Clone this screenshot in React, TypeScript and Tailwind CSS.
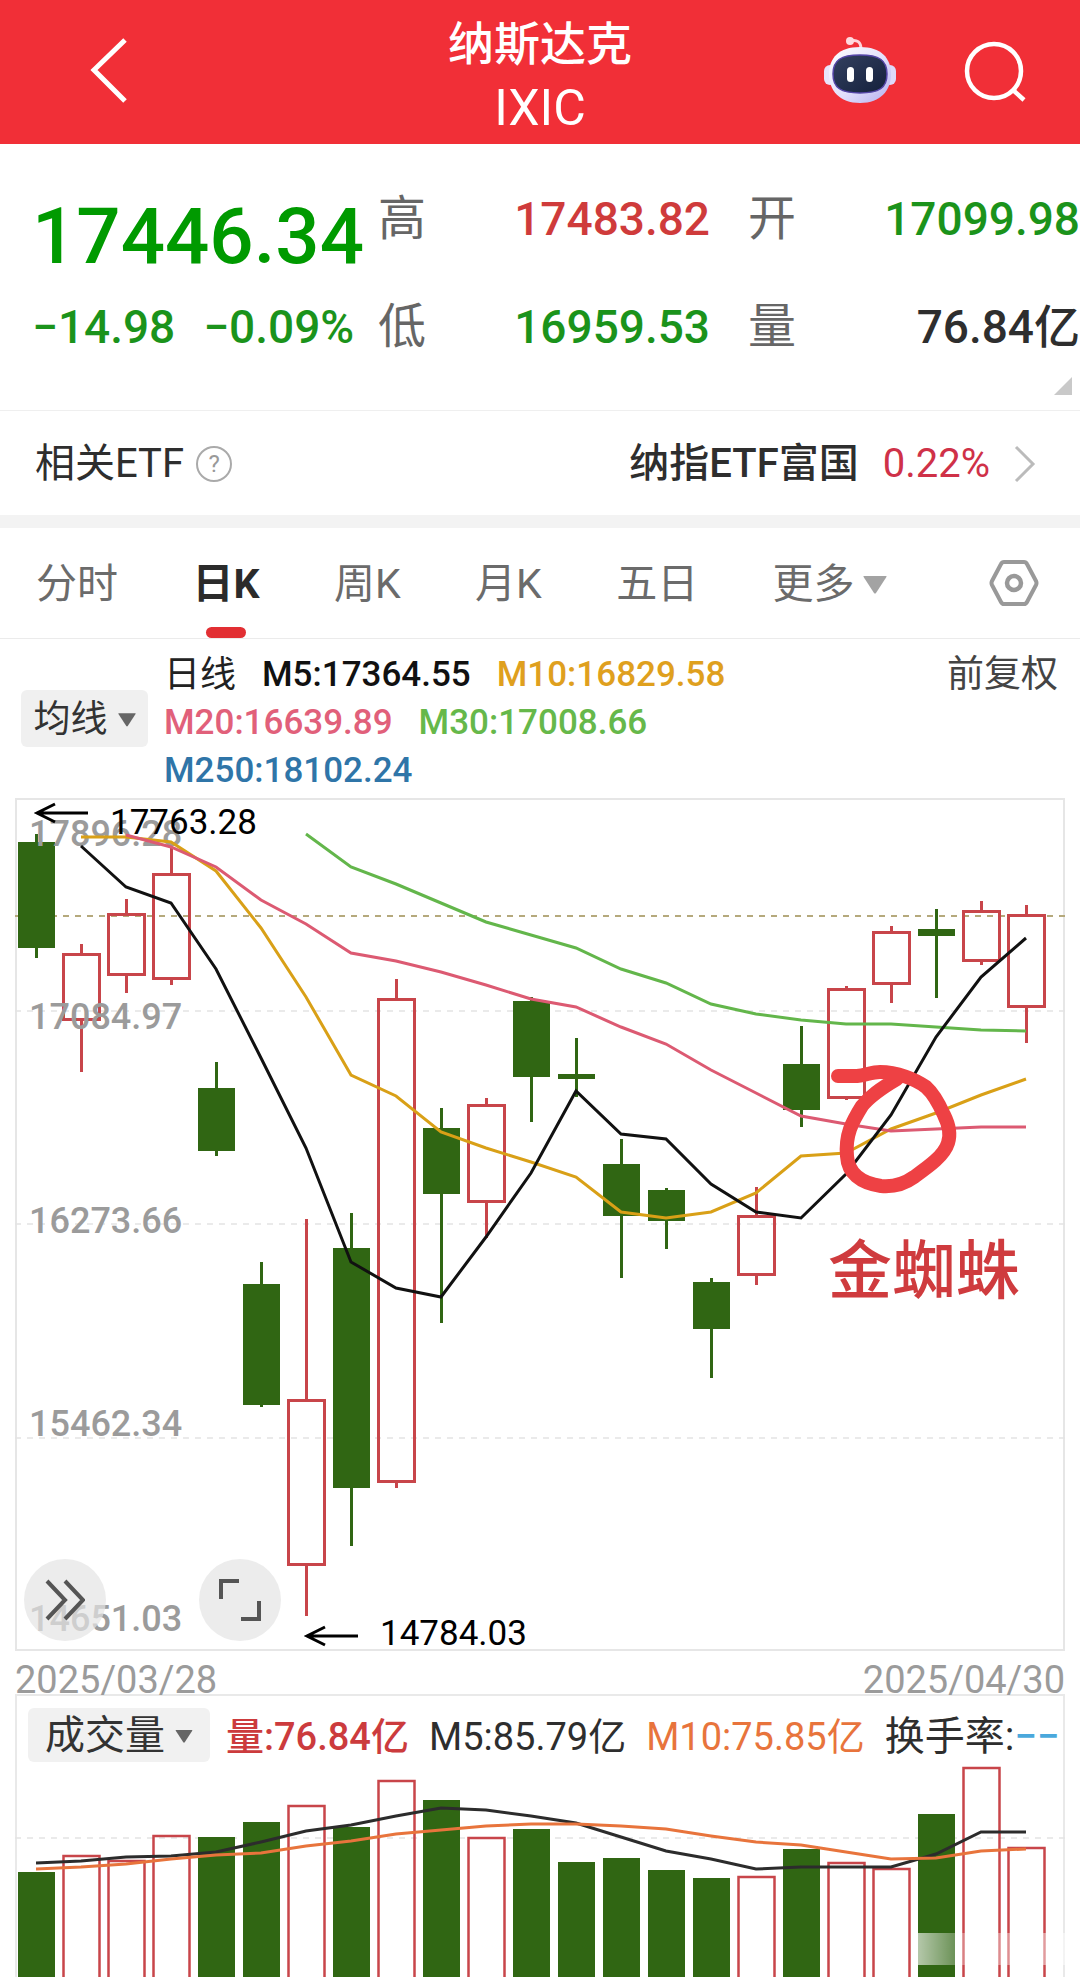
import React from "react";

type Candle = [up: 0 | 1, high: number, top: number, bottom: number, low: number];

const STEP = 45;
const FIRST_X = 36;
const cx = (i: number) => FIRST_X + i * STEP;

const candles: Candle[] = [
  [0, 834, 842, 948, 958], [1, 944, 953, 1021, 1072], [1, 899, 913, 976, 993],
  [1, 847, 873, 980, 985], [0, 1062, 1088, 1151, 1156], [0, 1262, 1284, 1405, 1407],
  [1, 1219, 1399, 1566, 1616], [0, 1213, 1248, 1488, 1546], [1, 979, 998, 1483, 1488],
  [0, 1108, 1128, 1194, 1323], [1, 1098, 1104, 1203, 1238], [0, 997, 1001, 1077, 1122],
  [0, 1038, 1074, 1079, 1097], [0, 1139, 1164, 1216, 1278], [0, 1188, 1190, 1221, 1249],
  [0, 1278, 1282, 1329, 1378], [1, 1187, 1215, 1276, 1285], [0, 1026, 1064, 1110, 1127],
  [1, 986, 988, 1099, 1100], [1, 926, 931, 985, 1003], [0, 909, 929, 936, 998],
  [1, 901, 910, 962, 965], [1, 905, 914, 1008, 1043],
];

const averages = [
  { color: "#63b64b", from: 6, ys: [834, 867, 884, 903, 922, 935, 948, 969, 983, 1004, 1014, 1020, 1024, 1024, 1027, 1030, 1031] },
  { color: "#d9a017", from: 1, ys: [837, 837, 842, 871, 928, 997, 1075, 1096, 1132, 1148, 1162, 1177, 1212, 1218, 1212, 1193, 1156, 1153, 1129, 1113, 1095, 1079] },
  { color: "#dc5a72", from: 2, ys: [835, 847, 867, 900, 924, 953, 961, 972, 985, 999, 1007, 1027, 1044, 1070, 1093, 1116, 1124, 1131, 1129, 1127, 1127] },
  { color: "#111111", from: 1, ys: [846, 887, 903, 969, 1058, 1148, 1262, 1288, 1297, 1237, 1173, 1091, 1134, 1139, 1184, 1212, 1218, 1174, 1115, 1037, 977, 938] },
];

const volumeTops = [1872, 1855, 1860, 1835, 1837, 1822, 1805, 1827, 1780, 1800, 1837, 1829, 1862, 1858, 1870, 1878, 1876, 1849, 1862, 1868, 1814, 1767, 1847];

const volumeAverages = [
  { color: "#2c2c2c", ys: [1863, 1861, 1857, 1856, 1852, 1842, 1831, 1825, 1816, 1808, 1810, 1816, 1823, 1837, 1851, 1859, 1869, 1867, 1867, 1867, 1854, 1832, 1832] },
  { color: "#e8743c", ys: [1869, 1867, 1864, 1859, 1855, 1853, 1846, 1841, 1834, 1830, 1826, 1824, 1824, 1826, 1829, 1836, 1842, 1845, 1852, 1859, 1858, 1851, 1849] },
];

const axisLabels: [string, number][] = [
  ["17896.28", 846], ["17084.97", 1029], ["16273.66", 1233], ["15462.34", 1436], ["14651.03", 1631],
];

const GREEN = "#306613";
const RED = "#c8454a";

const toPoints = (ys: number[], from = 0) => ys.map((y, k) => `${cx(from + k)},${y}`).join(" ");

function Robot() {
  return (
    <svg viewBox="0 0 72 68" className="h-[68px] w-[72px]" aria-hidden="true">
      <defs>
        <linearGradient id="shell" x1="0" y1="0" x2="1" y2="1">
          <stop offset="0" stopColor="#ffffff" />
          <stop offset="0.55" stopColor="#e2dffb" />
          <stop offset="1" stopColor="#b3aef0" />
        </linearGradient>
        <linearGradient id="visor" x1="0" y1="0" x2="1" y2="1">
          <stop offset="0" stopColor="#33405f" />
          <stop offset="1" stopColor="#14203c" />
        </linearGradient>
      </defs>
      <path d="M26 5c7-2 11 1 11 8" fill="none" stroke="#ffd3da" strokeWidth="3" />
      <circle cx="26" cy="5" r="4" fill="#ffd9de" />
      <rect x="0" y="29" width="12" height="20" rx="6" fill="#e9e4fb" />
      <rect x="60" y="29" width="12" height="20" rx="6" fill="#ded9fa" />
      <path d="M36 11C57 11 67 22 67 38S57 67 36 67 5 54 5 38 15 11 36 11z" fill="url(#shell)" />
      <path d="M36 19C55 19 63 24 63 38S55 57 36 57 9 52 9 38s8-19 27-19z" fill="url(#visor)" stroke="#5546a8" strokeWidth="1.5" />
      <rect x="23" y="31" width="7" height="15" rx="3.5" fill="#fff" />
      <rect x="42" y="31" width="7" height="15" rx="3.5" fill="#fff" />
    </svg>
  );
}

function Caret({ className }: { className: string }) {
  return (
    <svg viewBox="0 0 24 18" className={className} aria-hidden="true">
      <path d="M1 0h22q1 0 .4 1L13 17q-1 1-2 0L.6 1Q0 0 1 0z" fill="currentColor" />
    </svg>
  );
}

function Header() {
  return (
    <header className="grid h-36 grid-cols-[1fr_auto_1fr] items-center bg-[#f12f37] text-white">
      <button type="button" aria-label="返回" className="ml-[90px] w-10">
        <svg viewBox="0 0 40 68" className="h-[68px] w-10" aria-hidden="true">
          <path d="M35 2 4 32l31 31" fill="none" stroke="#fff" strokeWidth="5" />
        </svg>
      </button>
      <h1 className="pt-2 text-center font-normal">
        <span className="block text-[46px] leading-16 font-medium">纳斯达克</span>
        <span className="block text-[50px] leading-16">IXIC</span>
      </h1>
      <div className="flex items-center justify-end gap-[68px] pr-[52px]">
        <button type="button" aria-label="智能助手" className="pb-1"><Robot /></button>
        <button type="button" aria-label="搜索">
          <svg viewBox="0 0 64 64" className="size-16" aria-hidden="true">
            <circle cx="30" cy="31" r="27" fill="none" stroke="#fff" strokeWidth="4.5" />
            <path d="m49 50 11 10" stroke="#fff" strokeWidth="4.5" />
          </svg>
        </button>
      </div>
    </header>
  );
}

function Stat({ label, value, className }: { label: string; value: string; className: string }) {
  return (
    <div className="flex items-center justify-between leading-[60px]">
      <dt className="text-5xl leading-[60px] font-normal text-[#666]">{label}</dt>
      <dd className={className}>{value}</dd>
    </div>
  );
}

function Quote() {
  return (
    <section className="relative grid h-[267px] grid-cols-[378fr_370fr_332fr] items-start border-b border-[#efefef] pt-[45px] whitespace-nowrap">
      <div className="pl-8">
        <p className="text-[78px] leading-[96px] font-medium text-[#009a00]">17446.34</p>
        <p className="mt-3 flex gap-7 text-[46px] leading-[60px] font-medium text-[#1b931b]">
          <span>−14.98</span>
          <span>−0.09%</span>
        </p>
      </div>
      <dl className="flex flex-col gap-12 pr-[38px] text-[46px] font-medium">
        <Stat label="高" value="17483.82" className="text-[#cf3b3b]" />
        <Stat label="低" value="16959.53" className="text-[#1b931b]" />
      </dl>
      <dl className="flex flex-col gap-12 text-[46px] font-medium">
        <Stat label="开" value="17099.98" className="text-[#1b931b]" />
        <Stat label="量" value="76.84亿" className="text-[#2e2e2e]" />
      </dl>
      <svg viewBox="0 0 18 18" className="absolute right-2 bottom-[15px] size-[18px]" aria-hidden="true">
        <path d="M18 0v18H0z" fill="#c9c9c9" />
      </svg>
    </section>
  );
}

function RelatedEtf() {
  return (
    <section className="flex h-[117px] items-center justify-between border-b-[13px] border-[#f3f3f3] pt-0.5 pr-9 pl-[35px] text-[40px] whitespace-nowrap text-[#2e2e2e]">
      <div className="flex items-center gap-3">
        <h2 className="font-normal">相关ETF</h2>
        <button type="button" aria-label="说明" className="flex size-9 items-center justify-center rounded-full border-2 border-[#aaa] text-2xl text-[#999]">
          ?
        </button>
      </div>
      <a href="#etf" className="mr-2 flex items-center">
        <span className="font-medium">纳指ETF富国</span>
        <span className="ml-6 text-[#cf3148]">0.22%</span>
        <svg viewBox="0 0 22 38" className="ml-6 h-[38px] w-[22px]" aria-hidden="true">
          <path d="m2 2 17 17L2 36" fill="none" stroke="#bbb" strokeWidth="3" />
        </svg>
      </a>
    </section>
  );
}

function Tabs() {
  return (
    <nav className="flex h-[111px] items-stretch justify-between border-b border-[#ebebeb] pr-[41px] pl-9 text-[41px] whitespace-nowrap text-[#6b6b6b]">
      <button type="button" className="pt-1">分时</button>
      <button type="button" aria-current="page" className="relative pt-1 font-bold text-[#2b2b2b]">
        日K
        <span className="absolute bottom-0 left-1/2 h-[11px] w-10 -translate-x-1/2 rounded-full bg-[#e22f33]" />
      </button>
      <button type="button" className="pt-1">周K</button>
      <button type="button" className="pt-1">月K</button>
      <button type="button" className="pt-1">五日</button>
      <button type="button" className="mr-7 flex items-center gap-2 pt-1">
        更多
        <Caret className="h-[18px] w-6 text-[#a3a3a3]" />
      </button>
      <button type="button" aria-label="设置">
        <svg viewBox="0 0 50 48" className="h-12 w-[50px]" aria-hidden="true">
          <path d="M15 3h20q2 0 3 2l9 17q1 2 0 4l-9 17q-1 2-3 2H15q-2 0-3-2L3 26q-1-2 0-4l9-17q1-2 3-2z" fill="none" stroke="#999" strokeWidth="4" />
          <circle cx="25" cy="24" r="7" fill="none" stroke="#999" strokeWidth="4.5" />
        </svg>
      </button>
    </nav>
  );
}

function Averages() {
  return (
    <section className="flex items-start pt-3 pr-[22px] pb-[3px] pl-[21px] text-[36px] leading-12 whitespace-nowrap">
      <button type="button" className="mt-[39px] flex h-[57px] w-[127px] items-center justify-center gap-[10px] rounded-md bg-[#f0f0f0] pt-0.5 text-[37px] text-[#333]">
        均线
        <Caret className="h-[14px] w-[18px] text-[#666]" />
      </button>
      <div className="ml-4 flex flex-1 flex-wrap gap-x-[26px] text-[35px] font-medium">
        <span className="text-[36px] font-normal text-[#222]">日线</span>
        <span className="text-[#111]">M5:17364.55</span>
        <span className="text-[#dfa01e]">M10:16829.58</span>
        <span className="basis-full" />
        <span className="text-[#e1607a]">M20:16639.89</span>
        <span className="text-[#66b84a]">M30:17008.66</span>
        <span className="basis-full" />
        <span className="text-[#2f75a8]">M250:18102.24</span>
      </div>
      <button type="button" className="text-[37px] text-[#444]">前复权</button>
    </section>
  );
}

function PriceChart() {
  return (
    <section className="relative mx-[15px]">
      <svg viewBox="15 798 1050 853" className="block h-auto w-full" role="img" aria-label="日K线图">
        <rect x="16" y="799" width="1048" height="851" fill="none" stroke="#e6e6e6" strokeWidth="2" />
        {[1011, 1224, 1438].map((y) => (
          <path key={y} d={`M15 ${y}H1065`} stroke="#e4e4e4" strokeWidth="1.5" strokeDasharray="6 6" />
        ))}
        <path d="M15 916H1065" stroke="#b5a97c" strokeWidth="2" strokeDasharray="6 6" />
        {candles.map(([up, high, top, bottom, low], i) => (
          <g key={i} stroke={up ? RED : GREEN} strokeWidth="3">
            <path d={`M${cx(i) + 0.5} ${high}V${top}M${cx(i) + 0.5} ${bottom}V${low}`} />
            {up ? (
              <rect x={cx(i) - 17.5} y={top + 1.5} width="36" height={bottom - top - 3} fill="none" />
            ) : (
              <rect x={cx(i) - 18} y={top} width="37" height={bottom - top} fill={GREEN} stroke="none" />
            )}
          </g>
        ))}
        <g fill="#9b9b9b" fontSize="36" fontWeight="500">
          {axisLabels.map(([text, y]) => (
            <text key={text} x="29" y={y}>{text}</text>
          ))}
        </g>
        {averages.map((line) => (
          <polyline key={line.color} points={toPoints(line.ys, line.from)} fill="none" stroke={line.color} strokeWidth="3" />
        ))}
        <g fontSize="35" fill="#000">
          <text x="110" y="834">17763.28</text>
          <text x="380" y="1645">14784.03</text>
        </g>
        <path d="M88 813H37M55 804 37 813 55 822M358 1636H307M325 1627 307 1636 325 1645" fill="none" stroke="#000" strokeWidth="3" />
        <path
          d="M838 1076H857C866 1075 872 1072 880 1072 897 1072 915 1079 926 1087 935 1095 940 1106 944 1115 949 1125 951 1134 948 1143 944 1156 928 1167 914 1177 903 1185 892 1187 881 1186 860 1183 848 1173 847 1156 845 1135 852 1122 862 1106 870 1096 880 1089 897 1079"
          fill="none" stroke="#ee4144" strokeWidth="14" strokeLinecap="round" strokeLinejoin="round"
        />
        <text x="828" y="1293" fontSize="64" fontWeight="500" fill="#cf3b3e">金蜘蛛</text>
      </svg>
      <button type="button" aria-label="展开" className="absolute bottom-[10px] left-[9px] flex size-[82px] items-center justify-center rounded-full bg-[#e4e4e4]/70">
        <svg viewBox="0 0 40 42" className="h-[42px] w-10" aria-hidden="true">
          <path d="m2 2 18 19L2 40M20 2l18 19-18 19" fill="none" stroke="#555" strokeWidth="4" />
        </svg>
      </button>
      <button type="button" aria-label="全屏" className="absolute bottom-[10px] left-[184px] flex size-[82px] items-center justify-center rounded-full bg-[#e4e4e4]/70">
        <svg viewBox="0 0 42 42" className="size-[42px]" aria-hidden="true">
          <path d="M20 2H2v18M40 22v18H22" fill="none" stroke="#555" strokeWidth="4" />
        </svg>
      </button>
    </section>
  );
}

function Volume() {
  return (
    <section className="mx-[15px]">
      <div className="flex h-[67px] items-start gap-5 border-x-2 border-t-2 border-[#e9e9e9] pt-3 pl-[11px] text-[38px] leading-[58px] whitespace-nowrap text-[#2e2e2e]">
        <button type="button" className="-mr-1 flex h-[54px] w-[182px] shrink-0 items-center justify-center gap-[10px] rounded-md bg-[#f1f1f1] pt-0.5 text-[40px] text-[#333]">
          成交量
          <Caret className="h-[13px] w-[18px] text-[#666]" />
        </button>
        <span className="font-medium text-[#cc3b3d]">量:76.84亿</span>
        <span>M5:85.79亿</span>
        <span className="text-[#e8743c]">M10:75.85亿</span>
        <span className="text-[40px]">换手率:<span className="font-medium text-[#4aa8dc]">−−</span></span>
      </div>
      <svg viewBox="15 1761 1050 216" className="block h-auto w-full" role="img" aria-label="成交量图">
        <defs>
          <linearGradient id="fade" x1="0" x2="1">
            <stop offset="0" stopColor="#fff" stopOpacity="0.65" />
            <stop offset="0.25" stopColor="#fff" stopOpacity="0.3" />
            <stop offset="1" stopColor="#fff" stopOpacity="0.5" />
          </linearGradient>
        </defs>
        <path d="M16 1761V1977M1064 1761V1977" stroke="#e9e9e9" strokeWidth="2" />
        <path d="M15 1838H1065" stroke="#e4e4e4" strokeWidth="1.5" strokeDasharray="6 6" />
        {volumeTops.map((top, i) =>
          candles[i][0] ? (
            <path key={i} d={`M${cx(i) - 17.5} 1977V${top + 1}H${cx(i) + 18.5}V1977`} fill="none" stroke={RED} strokeWidth="2.5" />
          ) : (
            <rect key={i} x={cx(i) - 18} y={top} width="37" height={1977 - top} fill={GREEN} />
          ),
        )}
        {volumeAverages.map((line) => (
          <polyline key={line.color} points={toPoints(line.ys)} fill="none" stroke={line.color} strokeWidth="3" />
        ))}
        <rect x="917" y="1933" width="148" height="32" fill="url(#fade)" />
      </svg>
    </section>
  );
}

export default function App() {
  return (
    <main className="min-h-screen overflow-hidden bg-white font-['Roboto','Noto_Sans_CJK_SC',sans-serif]">
      <Header />
      <Quote />
      <RelatedEtf />
      <Tabs />
      <Averages />
      <PriceChart />
      <div className="mx-[15px] flex h-[43px] items-start justify-between text-[38px] leading-[58px] text-[#9b9b9b]">
        <time dateTime="2025-03-28">2025/03/28</time>
        <time dateTime="2025-04-30">2025/04/30</time>
      </div>
      <Volume />
    </main>
  );
}
